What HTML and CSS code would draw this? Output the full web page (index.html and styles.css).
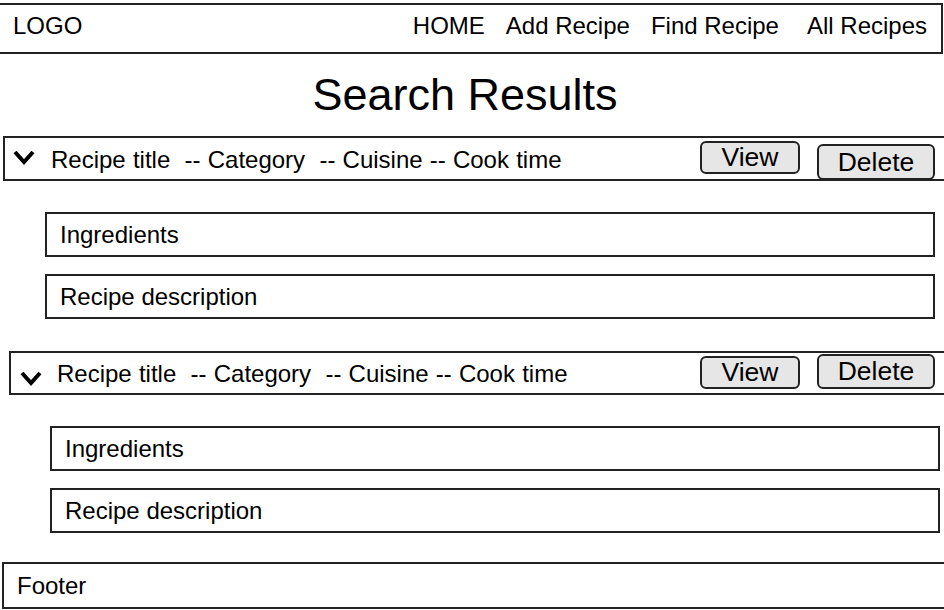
FILE: index.html
```html
<!DOCTYPE html>
<html lang="en">
<head>
<meta charset="utf-8">
<title>Search Results</title>
<link rel="stylesheet" href="styles.css">
</head>
<body>
<header class="topbar">
  <div class="logo">LOGO</div>
  <nav class="nav">
    <a class="nav-link" href="#">HOME</a>
    <a class="nav-link" href="#">Add Recipe</a>
    <a class="nav-link" href="#">Find Recipe</a>
    <a class="nav-link nav-link--last" href="#">All Recipes</a>
  </nav>
</header>

<h1 class="page-title">Search Results</h1>

<section class="recipe recipe--first">
  <div class="recipe-head">
    <svg class="chev chev--first" width="24" height="17" viewBox="0 0 24 17" aria-hidden="true"><polyline points="3,3 12,13 21,3" fill="none" stroke="#000" stroke-width="4"/></svg>
    <span class="recipe-info recipe-info--first">Recipe title&nbsp; -- Category&nbsp; -- Cuisine -- Cook time</span>
    <button class="btn btn-view">View</button>
    <button class="btn btn-delete btn-delete--first">Delete</button>
  </div>
  <div class="detail">Ingredients</div>
  <div class="detail">Recipe description</div>
</section>

<section class="recipe recipe--second">
  <div class="recipe-head recipe-head--second">
    <svg class="chev chev--second" width="24" height="17" viewBox="0 0 24 17" aria-hidden="true"><polyline points="3,3 12,13 21,3" fill="none" stroke="#000" stroke-width="4"/></svg>
    <span class="recipe-info recipe-info--second">Recipe title&nbsp; -- Category&nbsp; -- Cuisine -- Cook time</span>
    <button class="btn btn-view">View</button>
    <button class="btn btn-delete btn-delete--second">Delete</button>
  </div>
  <div class="detail">Ingredients</div>
  <div class="detail">Recipe description</div>
</section>

<footer class="footer">Footer</footer>
</body>
</html>
```

FILE: styles.css
```css
html, body {
  overflow: hidden;
}
body {
  margin: 0;
  width: 944px;
  height: 610px;
  background: #fff;
  color: #000;
  font-family: "Liberation Sans", Arial, sans-serif;
  font-size: 24px;
}
* {
  box-sizing: border-box;
}

/* header */
.topbar {
  display: flex;
  align-items: flex-start;
  margin: 3px 0 0 -4px;
  width: 947px;
  height: 51px;
  border: 2px solid #222;
  padding: 7px 14px 0 15px;
}
.logo {
  line-height: normal;
}
.nav {
  display: flex;
  gap: 21px;
  margin-left: auto;
}
.nav-link {
  color: #000;
  text-decoration: none;
}
.nav-link--last {
  margin-left: 7px;
}

/* title */
.page-title {
  margin: 18px 0 0;
  padding-right: 14px;
  font-size: 45px;
  font-weight: normal;
  line-height: 45px;
  text-align: center;
}

/* recipe blocks */
.recipe--first {
  margin: 19px 0 0 3px;
}
.recipe--second {
  margin: 32px 0 0 9px;
}
.recipe-head {
  display: flex;
  align-items: flex-start;
  height: 45px;
  margin-right: -2px;
  border: 2px solid #222;
  padding-right: 9px;
}
.recipe-head--second {
  height: 44px;
}
.chev {
  flex: none;
  margin-left: 8px;
}
.chev--first {
  margin-left: 7px;
  margin-top: 11px;
}
.chev--second {
  margin-top: 17px;
}
.recipe-info {
  margin-left: 15px;
  line-height: 27px;
  white-space: nowrap;
  word-spacing: 0.5px;
}
.recipe-info--first {
  margin-top: 8px;
}
.recipe-info--second {
  margin-left: 14px;
  margin-top: 7px;
}

.btn {
  flex: none;
  padding: 0;
  font-family: "Liberation Sans", Arial, sans-serif;
  font-size: 26.5px;
  color: #000;
  background: #e6e6e6;
  border: 2px solid #222;
  border-radius: 6px;
  line-height: 1;
}
.btn-view {
  width: 100px;
  height: 33px;
  margin-left: auto;
  margin-top: 3px;
}
.btn-delete {
  width: 118px;
  margin-left: 17px;
}
.btn-delete--first {
  height: 36px;
  margin-top: 6px;
}
.btn-delete--second {
  height: 35px;
  margin-top: 1px;
}

.detail {
  display: flex;
  align-items: center;
  width: 890px;
  height: 45px;
  margin: 31px 0 0 42px;
  border: 2px solid #222;
  padding-left: 13px;
}
.detail + .detail {
  margin-top: 17px;
}
.recipe--second .detail {
  margin-left: 41px;
}
.recipe--second .detail:first-of-type {
  margin-top: 32px;
}

/* footer */
.footer {
  display: flex;
  align-items: center;
  height: 47px;
  margin: 29px -2px 0 2px;
  border: 2px solid #222;
  padding-left: 13px;
}
```
